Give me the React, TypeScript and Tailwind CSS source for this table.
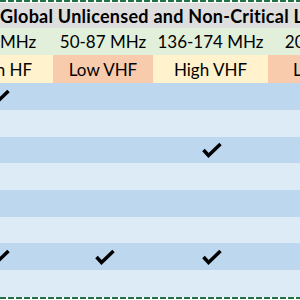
import React from 'react';

// Blue body rows: height and which of the first three columns hold a tick.
const rows: { h: string; ticks: number[] }[] = [
  { h: 'h-[27px]', ticks: [0] },
  { h: 'h-[27px]', ticks: [] },
  { h: 'h-[26px]', ticks: [2] },
  { h: 'h-[27px]', ticks: [] },
  { h: 'h-[27px]', ticks: [] },
  { h: 'h-[26px]', ticks: [] },
  { h: 'h-[27px]', ticks: [0, 1, 2] },
  { h: 'h-[27px]', ticks: [] },
];

const colW = ['w-[110px]', 'w-[100px]', 'w-[115px]', 'w-[120px]'];
const freqs = ['3-30 MHz', '50-87 MHz', '136-174 MHz', '20-30 MHz'];
const bands = ['Open HF', 'Low VHF', 'High VHF', 'Low UHF'];
const bandBg = ['bg-[#fff2cc]', 'bg-[#f8cbad]', 'bg-[#fff2cc]', 'bg-[#f8cbad]'];

const Tick = () => (
  <svg width="20" height="16" viewBox="0 0 20 16" fill="none">
    <polyline points="1.5,8 6.5,13.5 18.5,2" stroke="#000" strokeWidth="3.5" />
  </svg>
);

const Dashes = () => (
  <div className="h-[2px] bg-[repeating-linear-gradient(90deg,#217346_0_6px,#ffffff_6px_8px)]" />
);

export default function App() {
  return (
    <div className="w-[300px] h-[300px] overflow-hidden bg-white font-['Lato',sans-serif] text-[17px] leading-none text-black">
      <Dashes />
      <div className="h-px" />
      {/* merged title cell */}
      <div className="h-[25px] bg-[#dedede] flex items-center whitespace-nowrap font-bold text-[18px] tracking-[0.26px]">
        Global Unlicensed and Non-Critical Licensed Bands
      </div>
      <div className="flex ml-[-57px] h-[27px] bg-[#e2efda]">
        {freqs.map((f, i) => (
          <div key={f} className={`${colW[i]} shrink-0 flex items-center justify-center whitespace-nowrap`}>
            {f}
          </div>
        ))}
      </div>
      <div className="flex ml-[-57px] h-[28px]">
        {bands.map((b, i) => (
          <div key={b} className={`${colW[i]} ${bandBg[i]} shrink-0 flex items-center justify-center whitespace-nowrap`}>
            {b}
          </div>
        ))}
      </div>
      {rows.map((r, ri) => (
        <div key={ri} className={`flex ml-[-57px] ${r.h} ${ri % 2 === 0 ? 'bg-[#bdd7ee]' : 'bg-[#ddebf7]'}`}>
          {colW.map((w, ci) => (
            <div key={ci} className={`${w} shrink-0 flex items-center justify-center pl-[3px]`}>
              {r.ticks.includes(ci) && <Tick />}
            </div>
          ))}
        </div>
      ))}
      <Dashes />
    </div>
  );
}
